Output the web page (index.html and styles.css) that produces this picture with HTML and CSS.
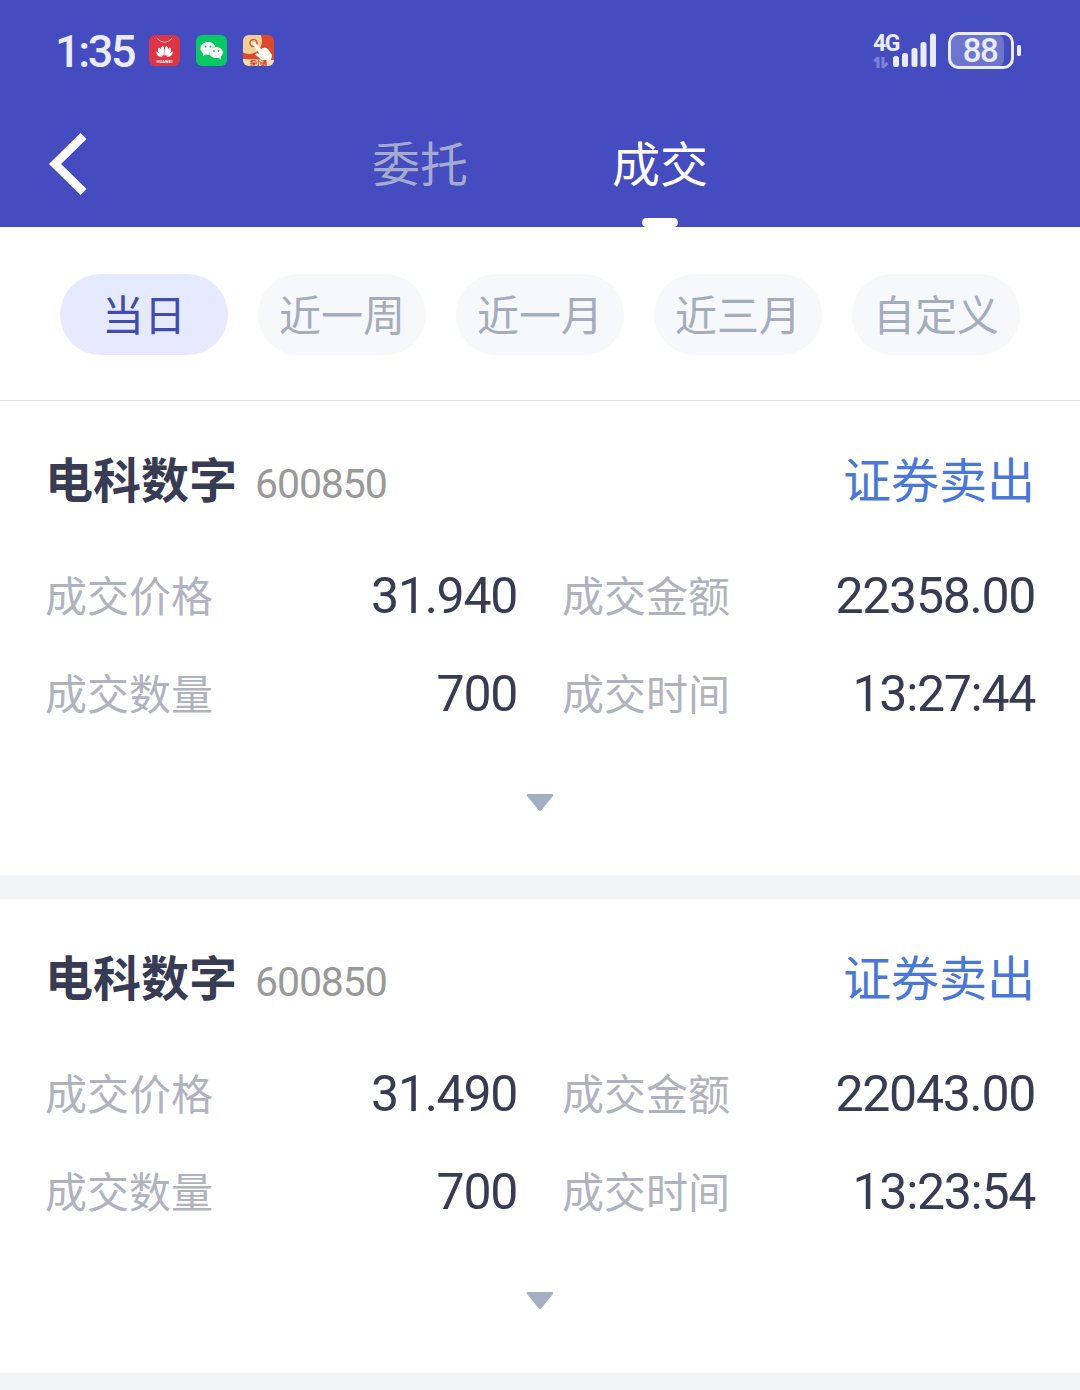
FILE: index.html
```
<!DOCTYPE html>
<html lang="zh-CN">
<head>
    <meta charset="UTF-8">
    <meta name="viewport" content="width=device-width, initial-scale=1.0">
    <title>成交</title>
    <link rel="stylesheet" href="styles.css">
</head>
<body>

    <header class="header">
        <!-- Status bar -->
        <div class="status-bar">
            <div class="status-left">
                <span class="clock">1:35</span>
                <svg class="app-icon" viewBox="0 0 31 31">
                    <rect width="31" height="31" rx="6" fill="#dc3545"/>
                    <path d="M8 3.500 Q15.500 11 23 3.500" fill="none" stroke="#f5b5bb" stroke-width="1"/>
                    <g fill="#fff">
                        <path d="M15.200 21 C10.500 16 11 12 14 11 Q16 14 15.200 21z"/>
                        <path d="M15.800 21 C20.500 16 20 12 17 11 Q15 14 15.800 21z"/>
                        <path d="M14 21 C8.500 18 8 14.500 10 12.500 Q13.500 15 14 21z"/>
                        <path d="M17 21 C22.500 18 23 14.500 21 12.500 Q17.500 15 17 21z"/>
                        <path d="M13.500 21.800 C9 22 7 19.500 7.400 16.500 Q11.500 18 13.500 21.800z"/>
                        <path d="M17.500 21.800 C22 22 24 19.500 23.600 16.500 Q19.500 18 17.500 21.800z"/>
                    </g>
                    <text class="icon-text" x="15.5" y="27.5" font-size="4.2" textLength="16">HUAWEI</text>
                </svg>
                <svg class="app-icon" viewBox="0 0 31 31">
                    <rect width="31" height="31" rx="6" fill="#07c863"/>
                    <path d="M12 7 C7.500 7 4.500 10 4.500 13.500 C4.500 15.700 5.600 17.300 7.300 18.500 L6.800 21 L9.800 19.500 Q12 20.200 14 19.800 C12.500 15 16 11.800 19.300 11.900 C18.500 9 15.600 7 12 7z" fill="#fff"/>
                    <ellipse cx="20.200" cy="17.500" rx="6.600" ry="5.600" fill="#fff"/>
                    <path d="M22 21 L24.500 25 L25 20z" fill="#fff"/>
                    <g fill="#07c863">
                        <circle cx="9.500" cy="11.500" r="1"/>
                        <circle cx="14.500" cy="11.500" r="1"/>
                        <circle cx="18" cy="16" r=".9"/>
                        <circle cx="22.500" cy="16" r=".9"/>
                    </g>
                </svg>
                <svg class="app-icon" viewBox="0 0 31 31">
                    <defs>
                        <clipPath id="round"><rect width="31" height="31" rx="6"/></clipPath>
                    </defs>
                    <g clip-path="url(#round)">
                        <rect width="31" height="31" fill="#dc4a2e"/>
                        <circle cx="6" cy="6" r="13" fill="#f0cf96"/>
                        <path d="M0 24 L31 25 V31 H0z" fill="#f7dfb4"/>
                        <circle cx="10.500" cy="8" r="3.500" fill="none" stroke="#d45b35" stroke-width="1.500"/>
                        <path d="M9 8 Q11 6 13 8.500 L18 14 Q22 11 25 14 L29 20 L28 25 H19 L12 19.500 Q14 17.500 16.500 19z" fill="#fffaf2"/>
                    </g>
                    <text class="icon-text icon-text-red" x="15.500" y="30" font-size="6" textLength="17">探小通</text>
                </svg>
            </div>
            <div class="status-right">
                <svg class="signal" width="64" height="38" viewBox="0 0 64 38">
                    <text class="net-text" x="1" y="19">4G</text>
                    <path d="M6 25 V36 M2 29.500 L6 25.500 M11 25 V36 M11 35.500 L15.500 31" class="data-arrows"/>
                    <g fill="#e9ebff">
                        <rect x="21" y="24" width="6" height="11" rx="2.500"/>
                        <rect x="30" y="21" width="6" height="14" rx="2.500"/>
                        <rect x="39.500" y="16" width="6" height="19" rx="2.500"/>
                        <rect x="48.500" y="10" width="6" height="25" rx="2.500"/>
                        <rect x="58" y="1.500" width="6" height="33.500" rx="2.500"/>
                    </g>
                </svg>
                <svg class="battery" width="74" height="38" viewBox="0 0 74 38">
                    <rect x="2.500" y="2" width="53.500" height="33" rx="8" fill="#6e75ce"/>
                    <rect x="1.500" y="1.500" width="63" height="34" rx="9" fill="none" stroke="#e9ebff" stroke-width="3"/>
                    <rect x="69" y="13" width="4" height="11" rx="1.500" fill="#e9ebff"/>
                    <text class="battery-text" x="32" y="30">88</text>
                </svg>
            </div>
        </div>

        <!-- Navigation -->
        <div class="nav">
            <svg class="back" width="38" height="64" viewBox="0 0 38 64">
                <path d="M34.500 4 L6 32 L34.500 60" fill="none" stroke="#fff" stroke-width="8.500"/>
            </svg>
            <div class="tabs">
                <div class="tab"><span>委托</span></div>
                <div class="tab active"><span>成交</span></div>
            </div>
        </div>
    </header>

    <div class="filters">
        <div class="filter active">当日</div>
        <div class="filter">近一周</div>
        <div class="filter">近一月</div>
        <div class="filter">近三月</div>
        <div class="filter">自定义</div>
    </div>

    <div class="list">
        <div class="card">
            <div class="card-head">
                <span class="name">电科数字</span>
                <span class="code">600850</span>
                <span class="side">证券卖出</span>
            </div>
            <div class="details">
                <div class="item"><span class="label">成交价格</span><span class="value">31.940</span></div>
                <div class="item"><span class="label">成交金额</span><span class="value">22358.00</span></div>
                <div class="item"><span class="label">成交数量</span><span class="value">700</span></div>
                <div class="item"><span class="label">成交时间</span><span class="value">13:27:44</span></div>
            </div>
            <svg class="expand" width="28" height="18" viewBox="0 0 28 18"><path d="M2 0 H26 Q28 0 27 2 L15.500 16 Q14 18 12.500 16 L1 2 Q0 0 2 0z" fill="#a3afc3"/></svg>
        </div>

        <div class="card">
            <div class="card-head">
                <span class="name">电科数字</span>
                <span class="code">600850</span>
                <span class="side">证券卖出</span>
            </div>
            <div class="details">
                <div class="item"><span class="label">成交价格</span><span class="value">31.490</span></div>
                <div class="item"><span class="label">成交金额</span><span class="value">22043.00</span></div>
                <div class="item"><span class="label">成交数量</span><span class="value">700</span></div>
                <div class="item"><span class="label">成交时间</span><span class="value">13:23:54</span></div>
            </div>
            <svg class="expand" width="28" height="18" viewBox="0 0 28 18"><path d="M2 0 H26 Q28 0 27 2 L15.500 16 Q14 18 12.500 16 L1 2 Q0 0 2 0z" fill="#a3afc3"/></svg>
        </div>
    </div>

</body>
</html>
```
FILE: styles.css
```
* {
    box-sizing: border-box;
}
body {
    margin: 0;
    width: 1080px;
    height: 1390px;
    overflow: hidden;
    display: flex;
    flex-direction: column;
    font-family: Roboto, "Noto Sans CJK SC", sans-serif;
    background-color: #f3f4f6;
    color: #373b54;
}
svg {
    display: block;
    flex: none;
    overflow: visible;
}

/* Header */
.header {
    height: 227px;
    flex: none;
    background-color: #444cbf;
    color: white;
}
.status-bar {
    height: 101px;
    padding: 0 58px 0 55px;
    display: flex;
    align-items: center;
    justify-content: space-between;
}
.status-left {
    display: flex;
    align-items: center;
    gap: 16px;
}
.clock {
    width: 78px;
    padding-top: 2px;
    font-size: 45px;
    font-weight: 500;
    line-height: 60px;
    letter-spacing: -2.3px;
    color: #e9ebff;
    white-space: nowrap;
}
.app-icon {
    width: 31px;
    height: 31px;
}
.icon-text {
    fill: white;
    font-weight: bold;
    text-anchor: middle;
}
.icon-text-red {
    fill: #c8321e;
}
.status-right {
    display: flex;
    align-items: center;
    gap: 12px;
}
.net-text {
    font-size: 23px;
    font-weight: bold;
    letter-spacing: -1.5px;
    fill: #e9ebff;
}
.data-arrows {
    fill: none;
    stroke: #7c82d6;
    stroke-width: 3;
}
.battery-text {
    font-size: 33px;
    font-weight: 500;
    letter-spacing: -1.5px;
    text-anchor: middle;
    fill: #e9ebff;
}
.nav {
    height: 126px;
    padding-left: 49px;
    display: flex;
    align-items: center;
}
.tabs {
    height: 126px;
    margin-left: 213px;
    display: flex;
}
.tab {
    width: 240px;
    display: flex;
    flex-direction: column;
    align-items: center;
    font-size: 48px;
    line-height: 113px;
    color: #a3abd0;
}
.tab span {
    height: 117px;
    padding-top: 8px;
}
.tab.active {
    color: white;
}
.tab.active::after {
    content: "";
    width: 36px;
    height: 9px;
    flex: none;
    border-radius: 4.5px;
    background: white;
}

/* Date range filters */
.filters {
    height: 174px;
    flex: none;
    padding: 47px 60px 0;
    display: flex;
    gap: 30px;
    background: white;
    border-bottom: 1px solid #e2e2e4;
}
.filter {
    width: 168px;
    height: 81px;
    padding-top: 2px;
    border-radius: 41px;
    background-color: #f6f8fc;
    color: #a5adbd;
    font-size: 42px;
    line-height: 81px;
    text-align: center;
}
.filter.active {
    background-color: #e5eafe;
    color: #444cab;
}

/* Deal list */
.list {
    display: flex;
    flex-direction: column;
    gap: 24px;
}
.card {
    height: 474px;
    padding: 45px 45px 0 45px;
    display: flex;
    flex-direction: column;
    align-items: center;
    background: white;
}
.card-head {
    width: 100%;
    height: 72px;
    display: flex;
    align-items: baseline;
    line-height: 72px;
}
.name {
    font-size: 48px;
    font-weight: bold;
}
.code {
    margin-left: 18px;
    font-size: 41px;
    letter-spacing: -1.1px;
    color: #999;
}
.side {
    margin-left: auto;
    font-size: 48px;
    color: #4a78d6;
}
.details {
    width: 100%;
    margin-top: 28px;
    display: grid;
    grid-template-columns: 472px 473px;
    column-gap: 45px;
}
.item {
    height: 98px;
    display: flex;
    align-items: center;
    justify-content: space-between;
}
.label {
    padding-bottom: 3px;
    font-size: 42px;
    color: #b0b3bf;
}
.value {
    padding-top: 2px;
    font-size: 50px;
    letter-spacing: -1.3px;
}
.expand {
    margin-top: 52px;
}
```
